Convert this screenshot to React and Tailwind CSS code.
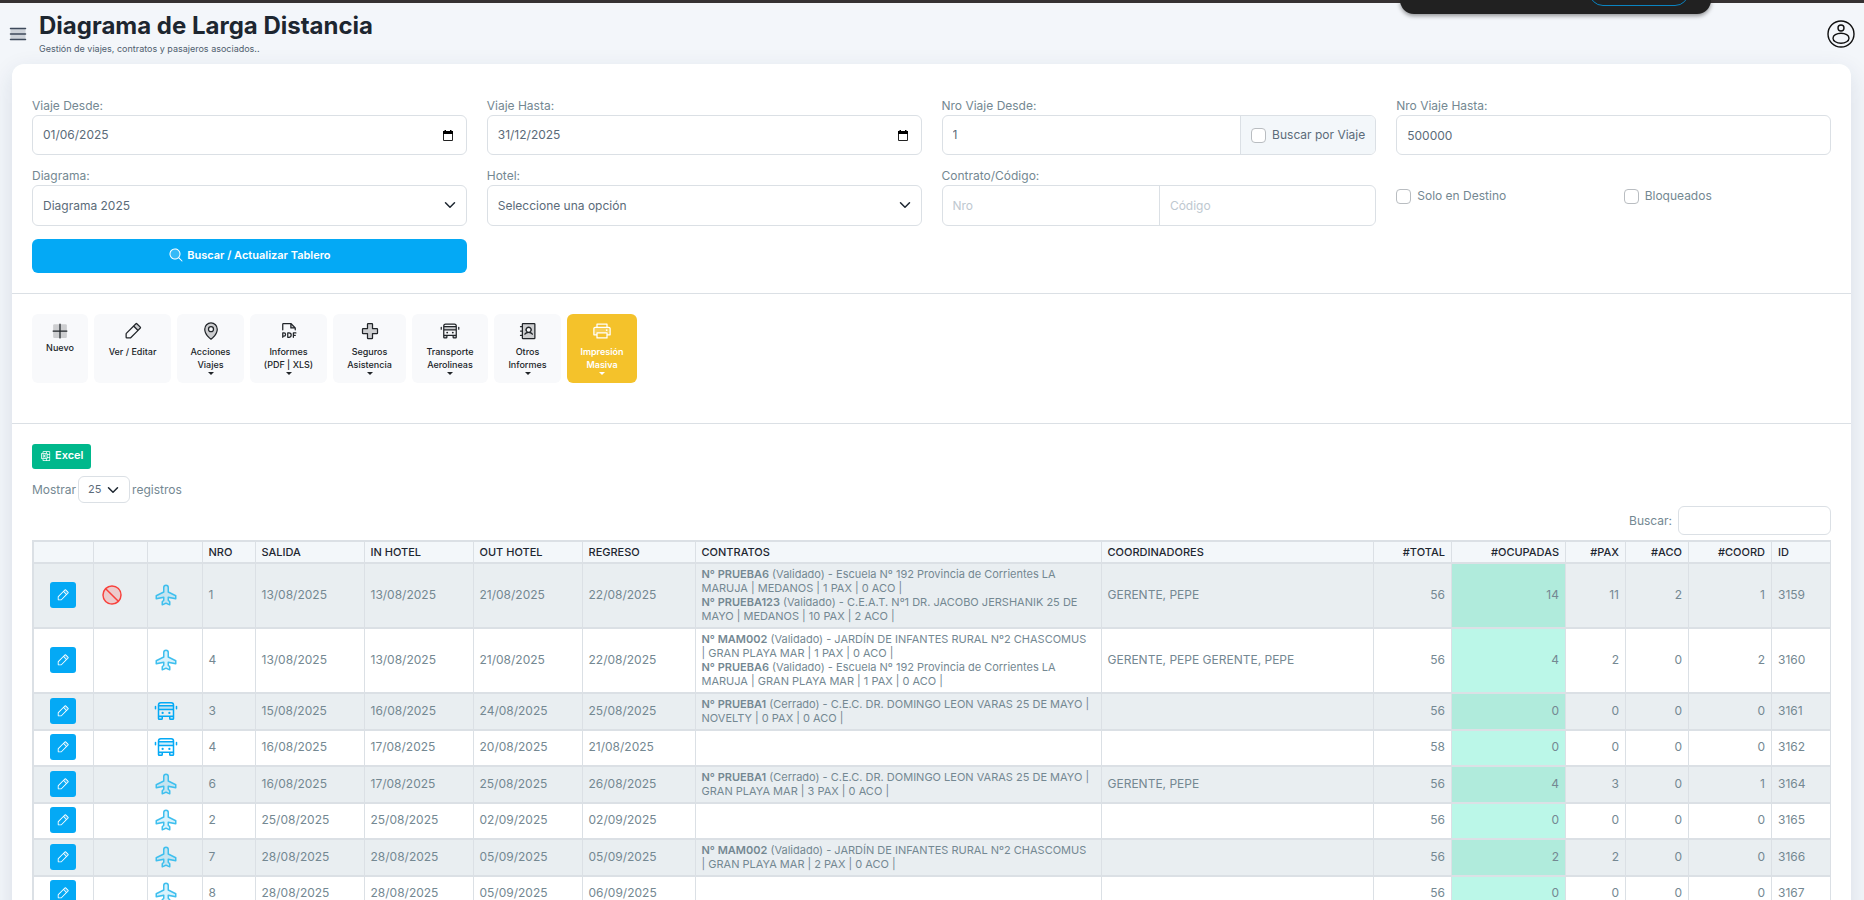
import React, { useState } from 'react';
import {
  PiAddressBookDuotone,
  PiAirplaneDuotone,
  PiBusDuotone,
  PiFilePdfDuotone,
  PiFirstAidDuotone,
  PiListDuotone,
  PiMagnifyingGlassDuotone,
  PiMapPinDuotone,
  PiMicrosoftExcelLogoDuotone,
  PiPencilSimpleDuotone,
  PiPlusDuotone,
  PiPrinterDuotone,
  PiProhibitDuotone,
} from 'react-icons/pi';

const acciones = [
  { icon: PiPlusDuotone, lines: ['Nuevo'], width: 'w-[56px]', compact: true },
  { icon: PiPencilSimpleDuotone, lines: ['Ver / Editar'], width: 'w-[77px]' },
  { icon: PiMapPinDuotone, lines: ['Acciones', 'Viajes'], width: 'w-[67px]', menu: true },
  { icon: PiFilePdfDuotone, lines: ['Informes', '(PDF | XLS)'], width: 'w-[77px]', menu: true },
  { icon: PiFirstAidDuotone, lines: ['Seguros', 'Asistencia'], width: 'w-[73px]', menu: true },
  { icon: PiBusDuotone, lines: ['Transporte', 'Aerolineas'], width: 'w-[76px]', menu: true },
  { icon: PiAddressBookDuotone, lines: ['Otros', 'Informes'], width: 'w-[67px]', menu: true },
  { icon: PiPrinterDuotone, lines: ['Impresión', 'Masiva'], width: 'w-[70px]', menu: true, warning: true },
];

const columnas = [
  { title: '', width: 'w-[60px]' },
  { title: '', width: 'w-[54px]' },
  { title: '', width: 'w-[55px]' },
  { title: 'NRO', width: 'w-[53px]' },
  { title: 'SALIDA', width: 'w-[109px]' },
  { title: 'IN HOTEL', width: 'w-[109px]' },
  { title: 'OUT HOTEL', width: 'w-[109px]' },
  { title: 'REGRESO', width: 'w-[113px]' },
  { title: 'CONTRATOS', width: 'w-[406px]' },
  { title: 'COORDINADORES', width: '' },
  { title: '#TOTAL', width: 'w-[78px]', num: true },
  { title: '#OCUPADAS', width: 'w-[114px]', num: true },
  { title: '#PAX', width: 'w-[60px]', num: true },
  { title: '#ACO', width: 'w-[63px]', num: true },
  { title: '#COORD', width: 'w-[83px]', num: true },
  { title: 'ID', width: 'w-[59px]' },
];

const viajes = [
  {
    id: 3159, nro: 1, tipo: 'avion', bloqueado: true,
    fechas: ['13/08/2025', '13/08/2025', '21/08/2025', '22/08/2025'],
    contratos: [
      ['PRUEBA6', '(Validado) - Escuela Nº 192 Provincia de Corrientes LA', 'MARUJA | MEDANOS | 1 PAX | 0 ACO |'],
      ['PRUEBA123', '(Validado) - C.E.A.T. Nº1 DR. JACOBO JERSHANIK 25 DE', 'MAYO | MEDANOS | 10 PAX | 2 ACO |'],
    ],
    coordinadores: 'GERENTE, PEPE', nums: [56, 14, 11, 2, 1],
  },
  {
    id: 3160, nro: 4, tipo: 'avion',
    fechas: ['13/08/2025', '13/08/2025', '21/08/2025', '22/08/2025'],
    contratos: [
      ['MAM002', '(Validado) - JARDÍN DE INFANTES RURAL Nº2 CHASCOMUS', '| GRAN PLAYA MAR | 1 PAX | 0 ACO |'],
      ['PRUEBA6', '(Validado) - Escuela Nº 192 Provincia de Corrientes LA', 'MARUJA | GRAN PLAYA MAR | 1 PAX | 0 ACO |'],
    ],
    coordinadores: 'GERENTE, PEPE GERENTE, PEPE', nums: [56, 4, 2, 0, 2],
  },
  {
    id: 3161, nro: 3, tipo: 'bus',
    fechas: ['15/08/2025', '16/08/2025', '24/08/2025', '25/08/2025'],
    contratos: [['PRUEBA1', '(Cerrado) - C.E.C. DR. DOMINGO LEON VARAS 25 DE MAYO |', 'NOVELTY | 0 PAX | 0 ACO |']],
    coordinadores: '', nums: [56, 0, 0, 0, 0],
  },
  {
    id: 3162, nro: 4, tipo: 'bus',
    fechas: ['16/08/2025', '17/08/2025', '20/08/2025', '21/08/2025'],
    contratos: [], coordinadores: '', nums: [58, 0, 0, 0, 0],
  },
  {
    id: 3164, nro: 6, tipo: 'avion',
    fechas: ['16/08/2025', '17/08/2025', '25/08/2025', '26/08/2025'],
    contratos: [['PRUEBA1', '(Cerrado) - C.E.C. DR. DOMINGO LEON VARAS 25 DE MAYO |', 'GRAN PLAYA MAR | 3 PAX | 0 ACO |']],
    coordinadores: 'GERENTE, PEPE', nums: [56, 4, 3, 0, 1],
  },
  {
    id: 3165, nro: 2, tipo: 'avion',
    fechas: ['25/08/2025', '25/08/2025', '02/09/2025', '02/09/2025'],
    contratos: [], coordinadores: '', nums: [56, 0, 0, 0, 0],
  },
  {
    id: 3166, nro: 7, tipo: 'avion',
    fechas: ['28/08/2025', '28/08/2025', '05/09/2025', '05/09/2025'],
    contratos: [['MAM002', '(Validado) - JARDÍN DE INFANTES RURAL Nº2 CHASCOMUS', '| GRAN PLAYA MAR | 2 PAX | 0 ACO |']],
    coordinadores: '', nums: [56, 2, 2, 0, 0],
  },
  {
    id: 3167, nro: 8, tipo: 'avion',
    fechas: ['28/08/2025', '28/08/2025', '05/09/2025', '06/09/2025'],
    contratos: [], coordinadores: '', nums: [56, 0, 0, 0, 0],
  },
];

// Row height by number of contracts
const alturas = ['h-9', 'h-[37px]', 'h-[65px]'];

const Chevron = ({ className }) => (
  <svg viewBox="0 0 16 16" className={`pointer-events-none absolute w-3 h-3 ${className}`} fill="none" stroke="#1d2630" strokeWidth="2" strokeLinecap="round" strokeLinejoin="round">
    <path d="m2 5 6 6 6-6" />
  </svg>
);

const Label = ({ htmlFor, children }) => (
  <label htmlFor={htmlFor} className="block h-[18px] leading-[18px] text-[#748892]">{children}</label>
);

const Fecha = ({ id, label, value }) => (
  <div>
    <Label htmlFor={id}>{label}</Label>
    <div className="flex items-center h-10 px-[10px] border border-[#dbe0e5] rounded-md bg-white">
      <input id={id} type="text" defaultValue={value} className="flex-1 min-w-0 outline-none text-[#5b6b79]" />
      <button type="button" aria-label="Abrir calendario" className="w-4 flex justify-center">
        <svg viewBox="0 0 10 11" className="w-[10px] h-[11px]">
          <path d="M.5 1.5h9v9h-9z" fill="none" stroke="#222" />
          <path d="M0 1h10v3H0zM1.500 0h1.500v1H1.500zM7 0h1.500v1H7z" fill="#000" />
        </svg>
      </button>
    </div>
  </div>
);

const Selector = ({ id, label, value }) => (
  <div>
    <Label htmlFor={id}>{label}</Label>
    <div className="relative">
      <select id={id} className="block w-full h-[41px] px-[10px] border border-[#dbe0e5] rounded-md bg-white appearance-none outline-none text-[#5b6b79]">
        <option>{value}</option>
      </select>
      <Chevron className="right-[11px] top-[14px]" />
    </div>
  </div>
);

const Check = ({ label, className = '' }) => (
  <label className={`flex items-center gap-[6px] ${className}`}>
    <input type="checkbox" className="appearance-none w-[15px] h-[15px] border border-[#b9bdc1] rounded-[4px] bg-white" />
    {label}
  </label>
);

const Header = () => (
  <header className="relative border-t-[3px] border-[#353132] flex items-start justify-between h-16 pl-[7px] pr-[9px]">
    <div className="flex items-start gap-[10px]">
      <button type="button" aria-label="Menú" className="mt-5 text-[#3e4a5b]">
        <PiListDuotone className="w-[22px] h-[22px]" />
      </button>
      <div className="pt-2">
        <h1 className="text-[24px] leading-[30px] font-bold text-[#1d2630]">Diagrama de Larga Distancia</h1>
        <p className="text-[9px] leading-[16px] text-[#4f5d6e]">Gestión de viajes, contratos y pasajeros asociados..</p>
      </div>
    </div>
    <button type="button" aria-label="Usuario" className="mt-[17px]">
      <svg viewBox="0 0 28 28" className="w-7 h-7" fill="none" stroke="#111" strokeWidth="1.4">
        <circle cx="14" cy="14" r="13" />
        <circle cx="14" cy="8" r="3" />
        <ellipse cx="14" cy="18.200" rx="8" ry="5" />
      </svg>
    </button>
    {/* Floating bar that hangs from the top edge */}
    <div className="absolute -top-[3px] right-[153px] w-[311px] h-[14px] rounded-b-[14px] bg-[#212121] shadow-[0_2px_4px_rgba(0,0,0,0.4)] overflow-hidden">
      <div className="absolute right-[22px] bottom-[8px] w-[100px] h-7 rounded-full border border-[#0a84c1]" />
    </div>
  </header>
);

const Filtros = () => (
  <form className="grid grid-cols-4 gap-x-5 px-5 pt-[33px] pb-5 border-b border-[#dbe0e5]" onSubmit={(e) => e.preventDefault()}>
    <Fecha id="desde" label="Viaje Desde:" value="01/06/2025" />
    <Fecha id="hasta" label="Viaje Hasta:" value="31/12/2025" />
    <div>
      <Label htmlFor="nro-desde">Nro Viaje Desde:</Label>
      <div className="flex h-10 border border-[#dbe0e5] rounded-md overflow-hidden">
        <input id="nro-desde" type="text" defaultValue="1" className="flex-1 min-w-0 px-[10px] outline-none text-[#5b6b79]" />
        <Check label="Buscar por Viaje" className="px-[10px] border-l border-[#dbe0e5] bg-[#f3f7fa] text-[#5b6b79]" />
      </div>
    </div>
    <div>
      <Label htmlFor="nro-hasta">Nro Viaje Hasta:</Label>
      <input id="nro-hasta" type="text" defaultValue="500000" className="block w-full h-10 px-[10px] border border-[#dbe0e5] rounded-md outline-none text-[#5b6b79]" />
    </div>

    <div className="mt-3"><Selector id="diagrama" label="Diagrama:" value="Diagrama 2025" /></div>
    <div className="mt-3"><Selector id="hotel" label="Hotel:" value="Seleccione una opción" /></div>
    <div className="mt-3">
      <Label htmlFor="contrato">Contrato/Código:</Label>
      <div className="flex h-[41px] border border-[#dbe0e5] rounded-md">
        <input id="contrato" type="text" placeholder="Nro" className="w-1/2 px-[10px] outline-none placeholder:text-[#bec8d0]" />
        <input type="text" aria-label="Código" placeholder="Código" className="w-1/2 px-[10px] border-l border-[#dbe0e5] outline-none placeholder:text-[#bec8d0]" />
      </div>
    </div>
    <div className="grid grid-cols-2 gap-x-5 items-start mt-8">
      <Check label="Solo en Destino" />
      <Check label="Bloqueados" />
    </div>

    <button type="submit" className="mt-[13px] h-[34px] pb-[2px] rounded-md bg-[#04a9f5] text-white text-[11px] font-semibold flex items-center justify-center gap-[3px]">
      <PiMagnifyingGlassDuotone className="w-4 h-4" /> Buscar / Actualizar Tablero
    </button>
  </form>
);

const Acciones = () => (
  <div className="flex gap-[6px] px-5 pt-5 pb-10 border-b border-[#dbe0e5] text-[9px] leading-[13px]">
    {acciones.map(({ icon: Icon, lines, width, compact, menu, warning }) => (
      <button
        key={lines[0]}
        type="button"
        className={`${width} h-[69px] pt-[7px] rounded-md flex flex-col items-center shrink-0 ${warning ? 'bg-[#f4c22b] text-white font-semibold' : 'bg-[#f8f9fb] text-[#212529] font-medium'}`}
      >
        <Icon className="w-5 h-5" />
        <span className={`whitespace-nowrap ${compact ? '' : 'mt-1'}`}>
          {lines.map((line) => <span key={line} className="block">{line}</span>)}
        </span>
        {menu && <span className="mt-[1px] border-x-[3px] border-t-[3px] border-x-transparent border-t-current" />}
      </button>
    ))}
  </div>
);

const Fila = ({ viaje }) => (
  <tr className={`group odd:bg-[#e9eef1] ${alturas[viaje.contratos.length]}`}>
    <td>
      <button type="button" aria-label={`Editar viaje ${viaje.id}`} className="flex items-center justify-center mx-auto w-[26px] h-[26px] rounded-[3px] bg-[#04a9f5] text-white">
        <PiPencilSimpleDuotone className="w-[14px] h-[14px]" />
      </button>
    </td>
    <td>{viaje.bloqueado && <PiProhibitDuotone className="w-6 h-6 text-[#f8413c]" />}</td>
    <td>
      {viaje.tipo === 'avion'
        ? <PiAirplaneDuotone className="w-6 h-6 text-[#3ebfee]" />
        : <PiBusDuotone className="w-6 h-6 text-[#04a9f5]" />}
    </td>
    <td>{viaje.nro}</td>
    {viaje.fechas.map((fecha, i) => <td key={i}>{fecha}</td>)}
    <td className="whitespace-nowrap">
      {viaje.contratos.map(([codigo, linea, resto]) => (
        <div key={codigo} className="text-[11px]">
          <b className="font-semibold">N° {codigo}</b> {linea}<br />{resto}
        </div>
      ))}
    </td>
    <td>{viaje.coordinadores}</td>
    {viaje.nums.map((n, i) => (
      <td key={i} className={`text-right ${i === 1 ? 'bg-[#bbf7e8] group-odd:bg-[#b0ebdc]' : ''}`}>{n}</td>
    ))}
    <td>{viaje.id}</td>
  </tr>
);

const Tablero = () => {
  const [buscar, setBuscar] = useState('');
  const texto = buscar.toLowerCase();
  const filas = viajes.filter((v) => JSON.stringify(v).toLowerCase().includes(texto));

  return (
    <section className="px-5 pt-5 pb-8">
      <button type="button" className="flex items-center gap-[3px] h-[25px] px-2 pb-[2px] rounded-[3px] bg-[#00b88c] text-white text-[11px] font-semibold">
        <PiMicrosoftExcelLogoDuotone className="w-3 h-3" /> Excel
      </button>
      <label className="flex items-center gap-[2px] mt-[7px]">
        Mostrar
        <span className="relative">
          <select className="block w-[52px] h-[27px] pl-[9px] border border-[#dbe0e5] rounded-md bg-white appearance-none outline-none text-[11px] text-[#5b6b79]">
            <option>25</option>
            <option>50</option>
            <option>100</option>
          </select>
          <Chevron className="right-[11px] top-[8px]" />
        </span>
        registros
      </label>
      <label className="flex items-center justify-end gap-[6px] mt-[3px]">
        Buscar:
        <input type="search" value={buscar} onChange={(e) => setBuscar(e.target.value)} className="w-[153px] h-[29px] px-2 border border-[#dbe0e5] rounded-md outline-none" />
      </label>

      <table className="mt-[5px] w-full table-fixed border-collapse leading-[14px] [&_td]:border-x [&_td]:border-y-2 [&_td]:border-[#dbe0e5] [&_td]:px-[6px] [&_td]:pb-[2px] [&_th]:border-x [&_th]:border-y-2 [&_th]:border-[#dbe0e5] [&_th]:px-[6px] [&_th]:py-0 [&_tr>*:first-child]:border-l-2">
        <colgroup>
          {columnas.map((col, i) => <col key={i} className={col.width} />)}
        </colgroup>
        <thead>
          <tr className="h-[22px] bg-[#f3f7fa] text-[11px] text-[#1d2630]">
            {columnas.map((col, i) => (
              <th key={i} className={`font-medium whitespace-nowrap ${col.num ? 'text-right' : 'text-left'}`}>{col.title}</th>
            ))}
          </tr>
        </thead>
        <tbody>
          {filas.map((viaje) => <Fila key={viaje.id} viaje={viaje} />)}
        </tbody>
      </table>
    </section>
  );
};

const App = () => (
  <div className="h-screen overflow-hidden bg-[#f3f6fa] font-['Inter',sans-serif] text-[12px] text-[#748892]">
    <Header />
    <main className="ml-3 mr-[13px] bg-white rounded-t-[12px] shadow-[0_8px_24px_rgba(27,46,94,0.12)]">
      <Filtros />
      <Acciones />
      <Tablero />
    </main>
  </div>
);

export default App;
